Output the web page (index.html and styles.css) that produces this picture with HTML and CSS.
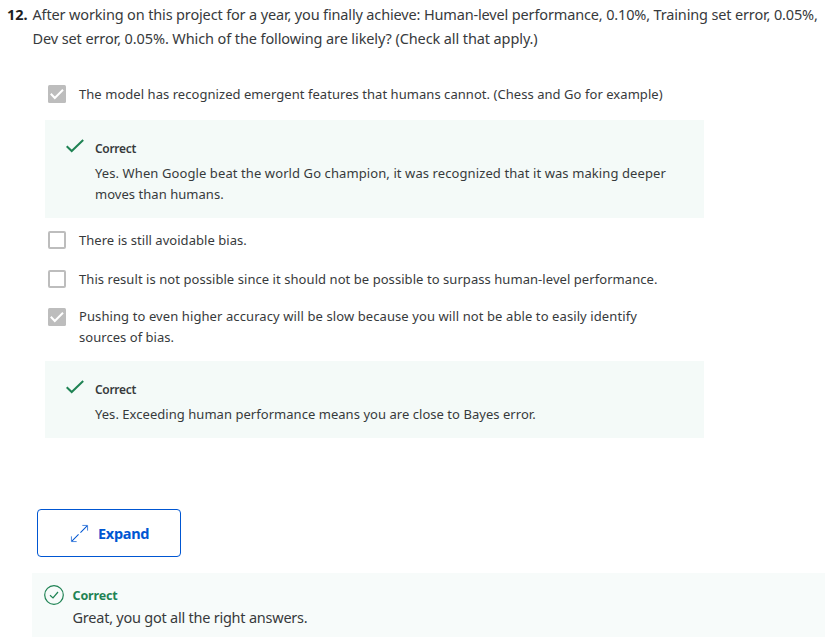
FILE: index.html
```html
<!DOCTYPE html>
<html lang="en">
<head>
<meta charset="utf-8">
<title>Quiz question</title>
<link rel="stylesheet" href="styles.css">
</head>
<body>
<main class="quiz">
  <section class="question">
    <span class="number">12.</span>
    <p class="prompt"><span class="line p1">After working on this project for a year, you finally achieve: Human-level performance, 0.10%, Training set error, 0.05%,</span><span class="line p2">Dev set error, 0.05%. Which of the following are likely? (Check all that apply.)</span></p>
  </section>
  <section class="options">
    <div class="option">
      <svg class="box" viewBox="0 0 18 18"><rect width="18" height="18" rx="1.5" fill="#bdbdbd"/><path d="M2.8 8.8 6.8 13 15 4.8" fill="none" stroke="#fff" stroke-width="2"/></svg>
      <p class="text"><span class="line o1">The model has recognized emergent features that humans cannot. (Chess and Go for example)</span></p>
    </div>
    <div class="feedback">
      <svg class="tick" viewBox="0 0 18 14"><path d="M.7 7.2 5.7 12 17.2 1" fill="none" stroke="#1f8354" stroke-width="2"/></svg>
      <div>
        <h3 class="verdict">Correct</h3>
        <p class="text"><span class="line f1">Yes. When Google beat the world Go champion, it was recognized that it was making deeper</span><span class="line f2">moves than humans.</span></p>
      </div>
    </div>
    <div class="option second">
      <svg class="box" viewBox="0 0 18 18"><rect x="1" y="1" width="16" height="16" rx="1" fill="#fff" stroke="#bdbdbd" stroke-width="2"/></svg>
      <p class="text"><span class="line">There is still avoidable bias.</span></p>
    </div>
    <div class="option third">
      <svg class="box" viewBox="0 0 18 18"><rect x="1" y="1" width="16" height="16" rx="1" fill="#fff" stroke="#bdbdbd" stroke-width="2"/></svg>
      <p class="text"><span class="line o3">This result is not possible since it should not be possible to surpass human-level performance.</span></p>
    </div>
    <div class="option fourth">
      <svg class="box" viewBox="0 0 18 18"><rect width="18" height="18" rx="1.5" fill="#bdbdbd"/><path d="M2.8 8.8 6.8 13 15 4.8" fill="none" stroke="#fff" stroke-width="2"/></svg>
      <p class="text"><span class="line o4">Pushing to even higher accuracy will be slow because you will not be able to easily identify</span><span class="line">sources of bias.</span></p>
    </div>
    <div class="feedback last">
      <svg class="tick" viewBox="0 0 18 14"><path d="M.7 7.2 5.7 12 17.2 1" fill="none" stroke="#1f8354" stroke-width="2"/></svg>
      <div>
        <h3 class="verdict">Correct</h3>
        <p class="text"><span class="line">Yes. Exceeding human performance means you are close to Bayes error.</span></p>
      </div>
    </div>
  </section>
  <button class="expand" type="button">
    <svg class="arrows" viewBox="0 0 20 20" fill="none" stroke="#0056d2"><path d="M11 9 18 2M9 11l-7 7" stroke-width="1.1"/><path d="M13 1.500h5.500V7M1.500 13v5.500H7" stroke-width="1" opacity=".75"/></svg>
    <span>Expand</span>
  </button>
  <section class="result">
    <svg class="badge" viewBox="0 0 20 20" fill="none" stroke="#1f8354" stroke-width="1.2"><circle cx="10" cy="10" r="9.3"/><path d="M6 10.300 9 13 14 7"/></svg>
    <div>
      <h2 class="title">Correct</h2>
      <p class="message">Great, you got all the right answers.</p>
    </div>
  </section>
</main>
</body>
</html>
```
FILE: styles.css
```css
* { box-sizing: border-box; }
body { margin: 0; background: #fff; color: #373a3c; font-family: "Source Sans Pro", "Noto Sans", sans-serif; }
p, h2, h3 { margin: 0; }
.quiz { width: 825px; height: 637px; overflow: hidden; }
.line { display: block; white-space: nowrap; }
.question { display: flex; height: 80px; padding: 2px 0 0 7px; font-size: 14.5px; line-height: 24px; }
.number { flex: none; width: 25.5px; font-weight: 700; color: #1f1f1f; }
.p1 { letter-spacing: -0.15px; }
.p2 { letter-spacing: -0.105px; }
.options { width: 704px; padding-left: 45px; }
.option { display: flex; gap: 13px; padding: 4px 0 0 3px; height: 40px; }
.box { width: 18px; height: 18px; margin-top: 1px; flex: none; }
.text { font-size: 13px; line-height: 21px; letter-spacing: 0.04px; }
.o1 { letter-spacing: 0.05px; }
.o3 { letter-spacing: 0.06px; }
.o4, .f1 { letter-spacing: 0.095px; }
.feedback { display: flex; gap: 11px; padding: 18px 0 0 21px; background: #f4faf8; height: 98px; }
.feedback.last { height: 77px; }
.tick { width: 18px; height: 14px; margin-top: 1px; flex: none; }
.verdict { font-size: 12px; line-height: 21px; margin-bottom: 4px; font-weight: 600; letter-spacing: -0.3px; }
.second { margin-top: 8px; height: 39px; }
.third { height: 38px; }
.fourth { height: 58px; padding-top: 3px; }
.fourth .box { margin-top: 2px; }
.expand { display: flex; align-items: center; gap: 9px; width: 144px; height: 48px; margin: 71px 0 16px 37px; padding: 0 0 0 32px; border: 1px solid #0056d2; border-radius: 4px; background: #fff; color: #0056d2; font: 700 14.5px "Source Sans Pro", "Noto Sans", sans-serif; letter-spacing: -0.3px; }
.arrows { width: 19px; height: 19px; }
.result { display: flex; gap: 8.5px; height: 64px; margin-left: 32px; padding: 12px 0 0 12px; background: #f7fbfa; }
.badge { width: 20px; height: 20px; }
.title { font-size: 12.5px; line-height: 21px; letter-spacing: -0.15px; color: #1f8354; }
.message { font-size: 14.5px; line-height: 23px; letter-spacing: -0.235px; }
```
